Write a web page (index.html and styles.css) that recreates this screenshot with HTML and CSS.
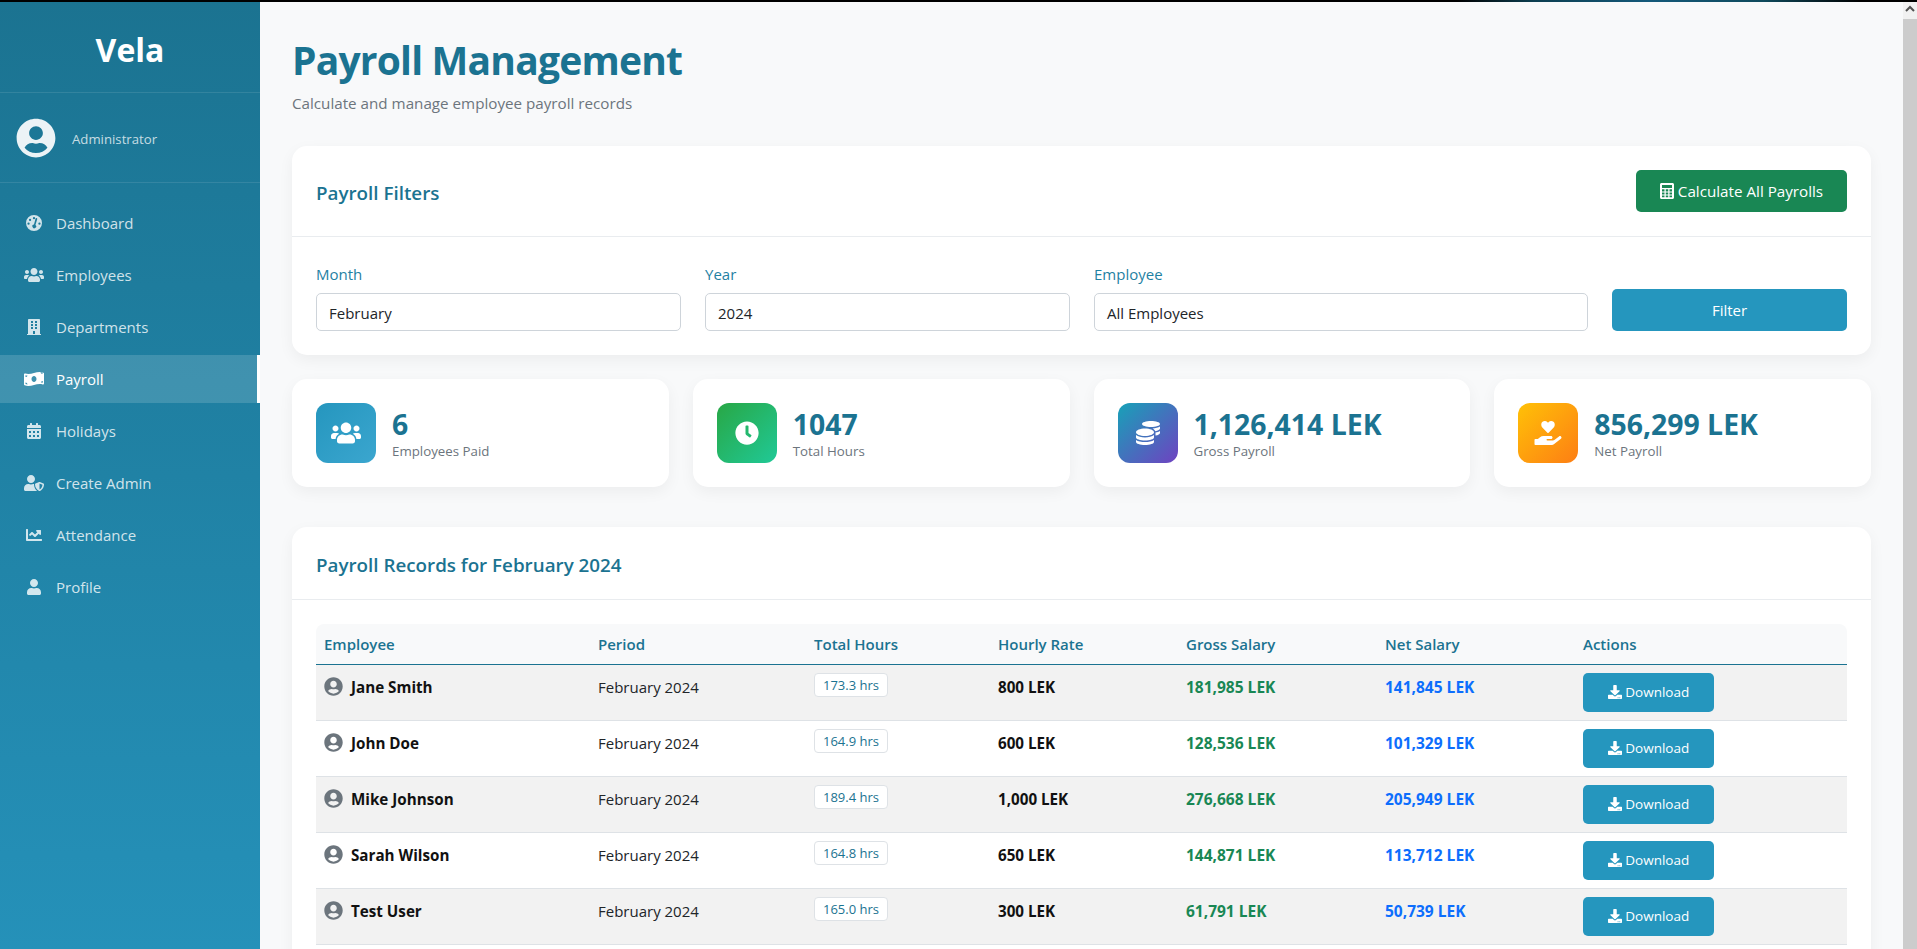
FILE: index.html
```html
<!DOCTYPE html>
<html lang="en">
<head>
<meta charset="utf-8">
<title>Payroll Management</title>
<link rel="stylesheet" href="styles.css">
</head>
<body>
<div class="topline"></div>
<div class="app">
  <aside class="sidebar">
    <div class="brand">Vela</div>
    <div class="userbox">
      <svg class="avatar" viewBox="0 0 496 512"><use href="#i-avatar"/></svg>
      <span class="role">Administrator</span>
    </div>
    <nav class="nav">
      <a class="nav-item"><svg class="nav-ico" viewBox="3.500 4 17 17"><path fill="currentColor" fill-rule="evenodd" d="M12 4a8.500 8.500 0 1 0 0 17 8.500 8.500 0 0 0 0-17zm0 2.200a1.200 1.200 0 1 1 0 2.400 1.200 1.200 0 0 1 0-2.400zM7.800 8a1.200 1.200 0 1 1 0 2.400 1.200 1.200 0 0 1 0-2.400zM6.200 12a1.200 1.200 0 1 1 0 2.400 1.200 1.200 0 0 1 0-2.400zm11.600 0a1.200 1.200 0 1 1 0 2.400 1.200 1.200 0 0 1 0-2.400zM15.400 8.500l-1.900 6a2 2 0 1 1-1.500-.4l1.600-6.200a.9.900 0 0 1 1.800.6z"/></svg><span>Dashboard</span></a>
      <a class="nav-item"><svg class="nav-ico" viewBox="0 0 640 512"><use href="#i-users"/></svg><span>Employees</span></a>
      <a class="nav-item"><svg class="nav-ico" viewBox="0 0 448 512"><path fill="currentColor" d="M436 480h-20V24c0-13.255-10.745-24-24-24H56C42.745 0 32 10.745 32 24v456H12c-6.627 0-12 5.373-12 12v20h448v-20c0-6.627-5.373-12-12-12zM128 76c0-6.627 5.373-12 12-12h40c6.627 0 12 5.373 12 12v40c0 6.627-5.373 12-12 12h-40c-6.627 0-12-5.373-12-12V76zm0 96c0-6.627 5.373-12 12-12h40c6.627 0 12 5.373 12 12v40c0 6.627-5.373 12-12 12h-40c-6.627 0-12-5.373-12-12v-40zm52 148h-40c-6.627 0-12-5.373-12-12v-40c0-6.627 5.373-12 12-12h40c6.627 0 12 5.373 12 12v40c0 6.627-5.373 12-12 12zm76 160h-64v-84c0-6.627 5.373-12 12-12h40c6.627 0 12 5.373 12 12v84zm64-172c0 6.627-5.373 12-12 12h-40c-6.627 0-12-5.373-12-12v-40c0-6.627 5.373-12 12-12h40c6.627 0 12 5.373 12 12v40zm0-96c0 6.627-5.373 12-12 12h-40c-6.627 0-12-5.373-12-12v-40c0-6.627 5.373-12 12-12h40c6.627 0 12 5.373 12 12v40zm0-96c0 6.627-5.373 12-12 12h-40c-6.627 0-12-5.373-12-12V76c0-6.627 5.373-12 12-12h40c6.627 0 12 5.373 12 12v40z"/></svg><span>Departments</span></a>
      <a class="nav-item active"><svg class="nav-ico" viewBox="0 0 640 512"><path fill="currentColor" d="M621.160 54.460C582.370 38.190 543.550 32 504.750 32c-123.170-.01-246.330 62.340-369.500 62.340-30.890 0-61.760-3.920-92.650-13.720-3.470-1.100-6.950-1.620-10.350-1.620C15.040 79 0 92.320 0 110.810v317.260c0 12.630 7.230 24.600 18.840 29.460C57.630 473.810 96.450 480 135.250 480c123.170 0 246.340-62.350 369.510-62.350 30.890 0 61.760 3.920 92.650 13.720 3.470 1.100 6.950 1.620 10.350 1.620 17.210 0 32.250-13.320 32.250-31.810V83.930c-.01-12.640-7.240-24.600-18.850-29.470zM48 132.220c20.120 5.040 41.120 7.570 62.720 8.930C104.820 170.540 79 192.690 48 192.690v-60.470zm0 285v-47.780c34.370 0 62.180 27.270 63.710 61.400-22.530-1.810-43.590-6.310-63.710-13.620zM320 352c-44.190 0-80-42.990-80-96 0-53.020 35.820-96 80-96s80 42.980 80 96c0 53.030-35.830 96-80 96zm272 27.780c-17.520-4.390-35.710-6.850-54.340-8.340 5.860-29.480 32.050-51.880 62.340-51.880v60.220zm0-285c-31.340 0-57.280-22.290-62.720-51.720 21.320 1.670 42.260 5.840 62.720 13.570v38.150z"/></svg><span>Payroll</span></a>
      <a class="nav-item"><svg class="nav-ico" viewBox="0 0 448 512"><path fill="currentColor" d="M0 464c0 26.500 21.500 48 48 48h352c26.500 0 48-21.500 48-48V192H0v272zm320-196c0-6.600 5.400-12 12-12h40c6.600 0 12 5.400 12 12v40c0 6.600-5.400 12-12 12h-40c-6.600 0-12-5.400-12-12v-40zm0 128c0-6.600 5.400-12 12-12h40c6.600 0 12 5.400 12 12v40c0 6.600-5.400 12-12 12h-40c-6.600 0-12-5.400-12-12v-40zM192 268c0-6.600 5.400-12 12-12h40c6.600 0 12 5.400 12 12v40c0 6.600-5.400 12-12 12h-40c-6.600 0-12-5.400-12-12v-40zm0 128c0-6.600 5.400-12 12-12h40c6.600 0 12 5.400 12 12v40c0 6.600-5.400 12-12 12h-40c-6.600 0-12-5.400-12-12v-40zM64 268c0-6.600 5.400-12 12-12h40c6.600 0 12 5.400 12 12v40c0 6.600-5.400 12-12 12H76c-6.600 0-12-5.400-12-12v-40zm0 128c0-6.600 5.400-12 12-12h40c6.600 0 12 5.400 12 12v40c0 6.600-5.400 12-12 12H76c-6.600 0-12-5.400-12-12v-40zM400 64h-48V16c0-8.800-7.200-16-16-16h-32c-8.800 0-16 7.200-16 16v48H160V16c0-8.800-7.200-16-16-16h-32c-8.800 0-16 7.200-16 16v48H48C21.500 64 0 85.500 0 112v48h448v-48c0-26.500-21.500-48-48-48z"/></svg><span>Holidays</span></a>
      <a class="nav-item"><svg class="nav-ico" viewBox="0 0 640 512"><path fill="currentColor" d="M622.300 271.100l-115.200-45c-4.100-1.600-12.600-3.700-22.200 0l-115.200 45c-10.700 4.200-17.700 14-17.700 24.900 0 111.600 68.700 188.800 132.900 213.900 9.600 3.700 18 1.600 22.200 0C558.400 489.900 640 420.500 640 296c0-10.900-7-20.700-17.700-24.900zM496 462.400V273.500l95.500 37.300c-5.600 87.100-60.900 135.400-95.500 151.600zM224 256c70.700 0 128-57.300 128-128S294.700 0 224 0 96 57.300 96 128s57.300 128 128 128zm96 40c0-2.500.8-4.800 1.100-7.200-2.500-.1-4.900-.8-7.500-.8h-16.700c-22.200 10.200-46.900 16-72.900 16s-50.600-5.800-72.900-16h-16.700C60.200 288 0 348.200 0 422.400V464c0 26.500 21.500 48 48 48h352c6.800 0 13.300-1.500 19.200-4-54-42.900-99.200-116.700-99.200-212z"/></svg><span>Create Admin</span></a>
      <a class="nav-item"><svg class="nav-ico" viewBox="0 0 512 512"><path fill="currentColor" d="M496 384H64V80c0-8.840-7.160-16-16-16H16C7.160 64 0 71.160 0 80v336c0 17.670 14.330 32 32 32h464c8.840 0 16-7.160 16-16v-32c0-8.840-7.160-16-16-16zM464 96H345.940c-21.380 0-32.090 25.850-16.970 40.970l32.400 32.400L288 242.750l-73.370-73.370c-12.500-12.500-32.760-12.500-45.250 0l-68.690 68.690c-6.250 6.250-6.250 16.380 0 22.630l22.620 22.620c6.250 6.250 16.380 6.250 22.630 0L192 237.250l73.370 73.370c12.500 12.500 32.760 12.500 45.250 0l96-96 32.400 32.400c15.120 15.120 40.970 4.410 40.970-16.970V112c.01-8.840-7.150-16-15.990-16z"/></svg><span>Attendance</span></a>
      <a class="nav-item"><svg class="nav-ico" viewBox="0 0 448 512"><path fill="currentColor" d="M224 256c70.700 0 128-57.300 128-128S294.700 0 224 0 96 57.300 96 128s57.300 128 128 128zm89.600 32h-16.700c-22.200 10.200-46.900 16-72.900 16s-50.600-5.800-72.900-16h-16.700C60.200 288 0 348.200 0 422.400V464c0 26.500 21.500 48 48 48h352c26.500 0 48-21.500 48-48v-41.600c0-74.200-60.200-134.400-134.400-134.400z"/></svg><span>Profile</span></a>
    </nav>
  </aside>
  <main class="main">
    <header class="page-head">
      <h1>Payroll Management</h1>
      <p>Calculate and manage employee payroll records</p>
    </header>
    <section class="card">
      <div class="card-head">
        <h2>Payroll Filters</h2>
        <button class="btn btn-green"><svg class="btn-ico" viewBox="0 0 448 512"><path fill="currentColor" fill-rule="evenodd" d="M48 0h352c26 0 48 22 48 48v416c0 26-22 48-48 48H48c-26 0-48-22-48-48V48C0 22 22 0 48 0zm16 64v96h320V64zm0 136v70h80v-70zm120 0v70h80v-70zm120 0v70h80v-70zM64 300v70h80v-70zm120 0v70h80v-70zm120 0v70h80v-70zM64 400v56h80v-56zm120 0v56h80v-56zm120 0v56h80v-56z"/></svg> Calculate All Payrolls</button>
      </div>
      <div class="filters">
        <label class="field"><span class="field-label">Month</span><span class="input">February</span></label>
        <label class="field"><span class="field-label">Year</span><span class="input">2024</span></label>
        <label class="field"><span class="field-label">Employee</span><span class="input">All Employees</span></label>
        <button class="btn btn-blue btn-filter">Filter</button>
      </div>
    </section>
    <section class="stats">
      <div class="stat"><div class="stat-ico g-blue"><svg class="stat-svg" viewBox="0 0 640 512"><use href="#i-users"/></svg></div><div><div class="stat-num">6</div><div class="stat-lbl">Employees Paid</div></div></div>
      <div class="stat"><div class="stat-ico g-green"><svg class="stat-svg" viewBox="0 0 512 512"><path fill="currentColor" d="M256,8C119,8,8,119,8,256S119,504,256,504,504,393,504,256,393,8,256,8Zm92.490,313h0l-20,25a16,16,0,0,1-22.490,2.500h0l-67-49.720a40,40,0,0,1-15-31.230V112a16,16,0,0,1,16-16h32a16,16,0,0,1,16,16V256l58,42.500A16,16,0,0,1,348.490,321Z"/></svg></div><div><div class="stat-num">1047</div><div class="stat-lbl">Total Hours</div></div></div>
      <div class="stat"><div class="stat-ico g-purple"><svg class="stat-svg" viewBox="0 0 512 512"><path fill="currentColor" d="M0 405.300V448c0 35.300 86 64 192 64s192-28.700 192-64v-42.700C342.700 434.400 267.200 448 192 448S41.300 434.400 0 405.300zM320 128c106 0 192-28.700 192-64S426 0 320 0 128 28.700 128 64s86 64 192 64zM0 300.400V352c0 35.300 86 64 192 64s192-28.700 192-64v-51.600c-41.300 34-116.900 51.600-192 51.600S41.300 334.400 0 300.400zm416 11c57.300-11.100 96-31.700 96-55.400v-42.700c-23.200 16.400-57.300 27.600-96 34.500v63.600zM192 160C86 160 0 195.800 0 240s86 80 192 80 192-35.800 192-80-86-80-192-80zm219.300 56.300c60-10.800 100.700-32 100.700-56.300v-42.700c-35.500 25.100-96.500 38.600-160.700 41.800 29.500 14.300 51.200 33.500 60 57.200z"/></svg></div><div><div class="stat-num">1,126,414 LEK</div><div class="stat-lbl">Gross Payroll</div></div></div>
      <div class="stat"><div class="stat-ico g-orange"><svg class="stat-svg" viewBox="0 0 576 512"><path fill="currentColor" d="M275.300 250.500c7 7.400 18.400 7.400 25.500 0l108.900-114.200c31.600-33.200 29.800-88.200-5.600-118.800-30.800-26.700-76.700-21.900-104.900 7.700L288 36.900l-11.100-11.600C248.700-4.400 202.800-9.200 172 17.500c-35.300 30.600-37.200 85.600-5.600 118.800l108.900 114.200zm290 77.600c-11.800-10.700-30.200-10-42.600 0l-92.400 73.900c-11.300 9.100-25.400 14-40 14H272c-8.800 0-16-7.200-16-16s7.200-16 16-16h78.300c15.900 0 30.700-10.900 33.300-26.600 3.300-20-12.100-37.400-31.600-37.400H192c-27 0-53.100 9.300-74.100 26.300L71.400 384H16c-8.800 0-16 7.200-16 16v96c0 8.800 7.200 16 16 16h356.800c14.500 0 28.600-4.900 40-14l151.200-121c15.200-12.100 16.400-35.300 1.300-48.900z"/></svg></div><div><div class="stat-num">856,299 LEK</div><div class="stat-lbl">Net Payroll</div></div></div>
    </section>
    <section class="card records">
      <div class="card-head records-head"><h2>Payroll Records for February 2024</h2></div>
      <div class="table-wrap">
        <table class="table">
          <colgroup><col class="c1"><col class="c2"><col class="c3"><col class="c4"><col class="c5"><col class="c6"><col class="c7"></colgroup>
          <thead><tr><th>Employee</th><th>Period</th><th>Total Hours</th><th>Hourly Rate</th><th>Gross Salary</th><th>Net Salary</th><th>Actions</th></tr></thead>
          <tbody>
            <tr><td class="emp"><svg class="emp-ico" viewBox="0 0 496 512"><use href="#i-avatar"/></svg>Jane Smith</td><td>February 2024</td><td><span class="hrs">173.3 hrs</span></td><td class="b">800 LEK</td><td class="gross">181,985 LEK</td><td class="net">141,845 LEK</td><td><button class="btn btn-blue btn-dl"><svg class="dl-ico" viewBox="0 0 512 512"><use href="#i-dl"/></svg> Download</button></td></tr>
            <tr><td class="emp"><svg class="emp-ico" viewBox="0 0 496 512"><use href="#i-avatar"/></svg>John Doe</td><td>February 2024</td><td><span class="hrs">164.9 hrs</span></td><td class="b">600 LEK</td><td class="gross">128,536 LEK</td><td class="net">101,329 LEK</td><td><button class="btn btn-blue btn-dl"><svg class="dl-ico" viewBox="0 0 512 512"><use href="#i-dl"/></svg> Download</button></td></tr>
            <tr><td class="emp"><svg class="emp-ico" viewBox="0 0 496 512"><use href="#i-avatar"/></svg>Mike Johnson</td><td>February 2024</td><td><span class="hrs">189.4 hrs</span></td><td class="b">1,000 LEK</td><td class="gross">276,668 LEK</td><td class="net">205,949 LEK</td><td><button class="btn btn-blue btn-dl"><svg class="dl-ico" viewBox="0 0 512 512"><use href="#i-dl"/></svg> Download</button></td></tr>
            <tr><td class="emp"><svg class="emp-ico" viewBox="0 0 496 512"><use href="#i-avatar"/></svg>Sarah Wilson</td><td>February 2024</td><td><span class="hrs">164.8 hrs</span></td><td class="b">650 LEK</td><td class="gross">144,871 LEK</td><td class="net">113,712 LEK</td><td><button class="btn btn-blue btn-dl"><svg class="dl-ico" viewBox="0 0 512 512"><use href="#i-dl"/></svg> Download</button></td></tr>
            <tr><td class="emp"><svg class="emp-ico" viewBox="0 0 496 512"><use href="#i-avatar"/></svg>Test User</td><td>February 2024</td><td><span class="hrs">165.0 hrs</span></td><td class="b">300 LEK</td><td class="gross">61,791 LEK</td><td class="net">50,739 LEK</td><td><button class="btn btn-blue btn-dl"><svg class="dl-ico" viewBox="0 0 512 512"><use href="#i-dl"/></svg> Download</button></td></tr>
          </tbody>
        </table>
      </div>
    </section>
  </main>
  <div class="scrollbar"><div class="sb-up"><svg viewBox="0 0 14 14" class="sb-arrow"><path d="M3 9l4-4 4 4" fill="none" stroke="#505050" stroke-width="2"/></svg></div><div class="sb-thumb"></div></div>
</div>
<svg class="defs" aria-hidden="true"><defs>
  <g id="i-users"><path fill="currentColor" d="M96 224c35.300 0 64-28.700 64-64s-28.700-64-64-64-64 28.700-64 64 28.700 64 64 64zm448 0c35.300 0 64-28.700 64-64s-28.700-64-64-64-64 28.700-64 64 28.700 64 64 64zm32 32h-64c-17.600 0-33.500 7.100-45.100 18.600 40.300 22.100 68.900 62 75.100 109.400h66c17.700 0 32-14.300 32-32v-32c0-35.300-28.700-64-64-64zm-256 0c61.900 0 112-50.100 112-112S381.900 32 320 32 208 82.100 208 144s50.100 112 112 112zm76.800 32h-8.300c-20.800 10-43.900 16-68.500 16s-47.600-6-68.500-16h-8.300C179.600 288 128 339.600 128 403.200V432c0 26.500 21.500 48 48 48h288c26.500 0 48-21.500 48-48v-28.800c0-63.600-51.600-115.200-115.200-115.200zm-223.700-13.400C161.500 263.100 145.600 256 128 256H64c-35.300 0-64 28.700-64 64v32c0 17.700 14.300 32 32 32h65.900c6.300-47.400 34.900-87.300 75.200-109.400z"/></g>
  <g id="i-avatar"><path fill="currentColor" d="M248 8C111 8 0 119 0 256s111 248 248 248 248-111 248-248S385 8 248 8zm0 96c48.600 0 88 39.400 88 88s-39.400 88-88 88-88-39.400-88-88 39.400-88 88-88zm0 344c-58.700 0-111.300-26.600-146.500-68.200 18.800-35.400 55.600-59.800 98.500-59.800 2.400 0 4.800.4 7.100 1.100 13 4.200 26.600 6.900 40.900 6.900 14.300 0 28-2.700 40.900-6.900 2.300-.7 4.700-1.100 7.100-1.100 42.900 0 79.700 24.400 98.500 59.800C359.300 421.400 306.700 448 248 448z"/></g>
  <g id="i-dl"><path fill="currentColor" d="M216 0h80c13.300 0 24 10.700 24 24v168h87.700c17.800 0 26.700 21.500 14.100 34.100L269.700 378.300c-7.500 7.500-19.800 7.500-27.300 0L90.100 226.100c-12.600-12.600-3.700-34.100 14.100-34.100H192V24c0-13.300 10.700-24 24-24zm296 376v112c0 13.300-10.700 24-24 24H24c-13.300 0-24-10.700-24-24V376c0-13.300 10.700-24 24-24h146.700l49 49c20.100 20.100 52.500 20.100 72.600 0l49-49H488c13.300 0 24 10.700 24 24zm-124 88c0-11-9-20-20-20s-20 9-20 20 9 20 20 20 20-9 20-20zm64 0c0-11-9-20-20-20s-20 9-20 20 9 20 20 20 20-9 20-20z"/></g>
</defs></svg>
</body>
</html>
```
FILE: styles.css
```css
* { box-sizing: border-box; }
html, body { height: 100%; margin: 0; overflow: hidden; }
body {
  font-family: "Open Sans", "Noto Sans", sans-serif;
  font-size: 16px;
  color: #212529;
  background: #f8f9fa;
  display: flex;
  flex-direction: column;
}
.topline {
  height: 2px;
  flex: none;
  background: linear-gradient(90deg, #000 76%, #0c3e50 80%, #14597a 86%, #0f4a5c 92%, #000 97%);
}
.defs { width: 0; height: 0; position: absolute; }
.app { display: flex; flex: 1; min-height: 0; }

.sidebar {
  width: 260px;
  flex: none;
  background: linear-gradient(180deg, #1b7391 0%, #2591b9 100%);
  color: #fff;
}
.brand {
  height: 91px;
  display: flex;
  align-items: center;
  justify-content: center;
  font-size: 32px;
  font-weight: 700;
  border-bottom: 1px solid rgba(255,255,255,.1);
  padding-top: 5px;
}
.userbox {
  height: 90px;
  display: flex;
  align-items: center;
  padding-left: 16px;
  gap: 16px;
  border-bottom: 1px solid rgba(255,255,255,.1);
}
.avatar { width: 40px; height: 40px; color: #ecf3f6; }
.role { font-size: 13.200px; color: rgba(255,255,255,.75); margin-top: 2px; }
.nav { padding-top: 16px; }
.nav-item {
  display: flex;
  align-items: center;
  height: 48px;
  margin-bottom: 4px;
  padding-left: 24px;
  gap: 12px;
  font-size: 15px;
  color: rgba(255,255,255,.8);
}
.nav-ico { width: 20px; height: 16px; flex: none; }
.nav-item.active {
  color: #fff;
  background: rgba(255,255,255,.15);
  border-right: 3px solid #fff;
}

.main { flex: 1; min-width: 0; padding: 32px 32px 0; overflow: hidden; }
.page-head { height: 112px; padding-top: 2px; }
h1 {
  margin: 0;
  font-size: 39px;
  letter-spacing: -.8px;
  line-height: 48px;
  font-weight: 700;
  color: #1b7391;
}
.page-head p { margin: 8px 0 0; font-size: 15.200px; line-height: 22px; color: #6c757d; }

.card {
  background: #fff;
  border-radius: 15px;
  box-shadow: 0 5px 15px rgba(0,0,0,.05);
  margin-bottom: 24px;
}
.card-head {
  height: 91px;
  display: flex;
  align-items: center;
  justify-content: space-between;
  padding: 0 24px;
  border-bottom: 1px solid #e9ecef;
}
h2 { margin: 4px 0 0; font-size: 18.800px; font-weight: 600; color: #1b7391; }
.btn {
  font-family: inherit;
  border: 0;
  border-radius: 5px;
  color: #fff;
  display: inline-flex;
  align-items: center;
  justify-content: center;
  white-space: pre;
}
.btn-green { background: #198754; width: 211px; height: 42px; font-size: 15.200px; }
.btn-blue { background: #2596be; }
.btn-ico { width: 14px; height: 16px; }
.filters {
  display: grid;
  grid-template-columns: 365px 365px 494px 235px;
  column-gap: 24px;
  align-items: end;
  padding: 24px;
  height: 118px;
}
.field { display: flex; flex-direction: column; }
.field-label { font-size: 15px; line-height: 22px; color: #1f81a3; margin-bottom: 8px; }
.input {
  height: 38px;
  border: 1px solid #ced4da;
  border-radius: 5px;
  padding: 1px 12px 0;
  display: flex;
  align-items: center;
  font-size: 15px;
  color: #212529;
}
.btn-filter { height: 42px; font-size: 15px; }

.stats {
  display: grid;
  grid-template-columns: repeat(4, 1fr);
  gap: 24px;
  margin-bottom: 40px;
}
.stat {
  height: 108px;
  background: #fff;
  border-radius: 15px;
  box-shadow: 0 5px 15px rgba(0,0,0,.05);
  display: flex;
  align-items: center;
  padding: 0 24px;
  gap: 16px;
}
.stat-ico {
  width: 60px;
  height: 60px;
  border-radius: 12px;
  display: flex;
  align-items: center;
  justify-content: center;
  color: #fff;
  flex: none;
}
.stat-svg { width: 30px; height: 24px; }
.g-blue { background: linear-gradient(135deg, #2596be, #3ba6cf); }
.g-green { background: linear-gradient(135deg, #28a745, #20c997); }
.g-purple { background: linear-gradient(135deg, #17a2b8, #6f42c1); }
.g-orange { background: linear-gradient(135deg, #ffc107, #fd7e14); }
.stat-num { font-size: 28.400px; line-height: 36px; font-weight: 700; color: #1b7391; }
.stat-lbl { font-size: 13.300px; line-height: 18px; color: #6c757d; }

.records-head { height: 73px; }
.table-wrap { padding: 24px 24px 40px; }
.table { width: 100%; border-collapse: collapse; table-layout: fixed; font-size: 15px; }
.c1 { width: 274px; } .c2 { width: 216px; } .c3 { width: 184px; }
.c4 { width: 188px; } .c5 { width: 199px; } .c6 { width: 198px; } .c7 { width: 272px; }
th {
  text-align: left;
  font-size: 15px;
  font-weight: 600;
  color: #1b7391;
  background: #f8f9fa;
  height: 40px;
  padding: 0 8px;
  border-bottom: 1px solid #1b7391;
}
th:first-child { border-top-left-radius: 8px; }
th:last-child { border-top-right-radius: 8px; }
td {
  height: 56px;
  padding: 8px;
  vertical-align: top;
  line-height: 28px;
  border-bottom: 1px solid #dee2e6;
}
tbody tr:nth-child(odd) td { background: #f2f2f2; }
.emp { font-weight: 700; font-size: 15.200px; color: #111; white-space: nowrap; }
.emp-ico { width: 19px; height: 19px; color: #6c757d; vertical-align: -3px; margin-right: 8px; }
.b { font-weight: 700; font-size: 15.200px; color: #111; }
.gross { font-weight: 700; font-size: 15.500px; color: #198754; }
.net { font-weight: 700; font-size: 15.500px; color: #0d6efd; }
.hrs {
  display: inline-block;
  vertical-align: top;
  width: 74px;
  height: 24px;
  line-height: 23px;
  text-align: center;
  font-size: 13px;
  color: #1b7391;
  background: #fff;
  border: 1px solid #dee2e6;
  border-radius: 4px;
}
.btn-dl { width: 131px; height: 39px; font-size: 13.500px; vertical-align: top; }
.dl-ico { width: 14px; height: 14px; }

.scrollbar { width: 14px; flex: none; background: #ccc; display: flex; flex-direction: column; }
.sb-up { height: 17px; background: #f1f1f1; }
.sb-arrow { width: 14px; height: 14px; display: block; }
.sb-thumb { flex: 1; }
```
